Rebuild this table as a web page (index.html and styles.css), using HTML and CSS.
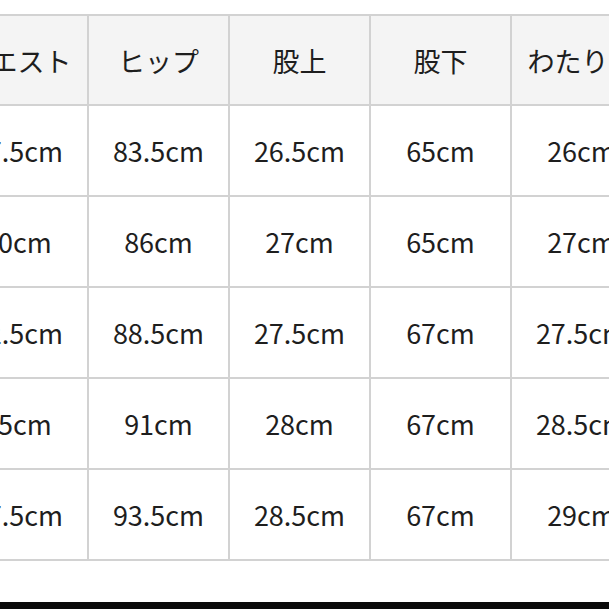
FILE: index.html
```html
<!DOCTYPE html>
<html lang="ja">
<head>
<meta charset="utf-8">
<link rel="stylesheet" href="styles.css">
</head>
<body>
<div class="page">
  <table class="size-table">
    <colgroup>
      <col class="c"><col class="c"><col class="c"><col class="c"><col class="c">
    </colgroup>
    <thead>
      <tr><th>ウエスト</th><th>ヒップ</th><th>股上</th><th>股下</th><th>わたり幅</th></tr>
    </thead>
    <tbody>
      <tr><td>67.5cm</td><td>83.5cm</td><td>26.5cm</td><td>65cm</td><td>26cm</td></tr>
      <tr><td>70cm</td><td>86cm</td><td>27cm</td><td>65cm</td><td>27cm</td></tr>
      <tr><td>72.5cm</td><td>88.5cm</td><td>27.5cm</td><td>67cm</td><td>27.5cm</td></tr>
      <tr><td>75cm</td><td>91cm</td><td>28cm</td><td>67cm</td><td>28.5cm</td></tr>
      <tr><td>77.5cm</td><td>93.5cm</td><td>28.5cm</td><td>67cm</td><td>29cm</td></tr>
    </tbody>
  </table>
  <div class="bottom-bar"></div>
</div>
</body>
</html>
```
FILE: styles.css
```css
html, body {
  margin: 0;
  padding: 0;
  background: #ffffff;
}
.page {
  width: 609px;
  height: 609px;
  overflow: hidden;
  display: flex;
  flex-direction: column;
}
.size-table {
  margin-top: 14px;
  margin-left: -54px;
  border-collapse: collapse;
  table-layout: fixed;
  width: 705px;
  flex: none;
  font-family: "Noto Sans CJK JP", "Noto Sans", sans-serif;
  color: #1e1e1e;
}
.size-table .c {
  width: 141px;
}
.size-table th,
.size-table td {
  border: 2px solid #d2d2d2;
  text-align: center;
  vertical-align: middle;
  padding: 0;
  font-size: 27px;
  font-weight: 400;
  height: 89px;
  white-space: nowrap;
  overflow: hidden;
}
.size-table th {
  background: #f4f4f4;
  height: 88px;
}
.bottom-bar {
  margin-top: auto;
  height: 7px;
  background: #0a0a0a;
  flex: none;
}
```
